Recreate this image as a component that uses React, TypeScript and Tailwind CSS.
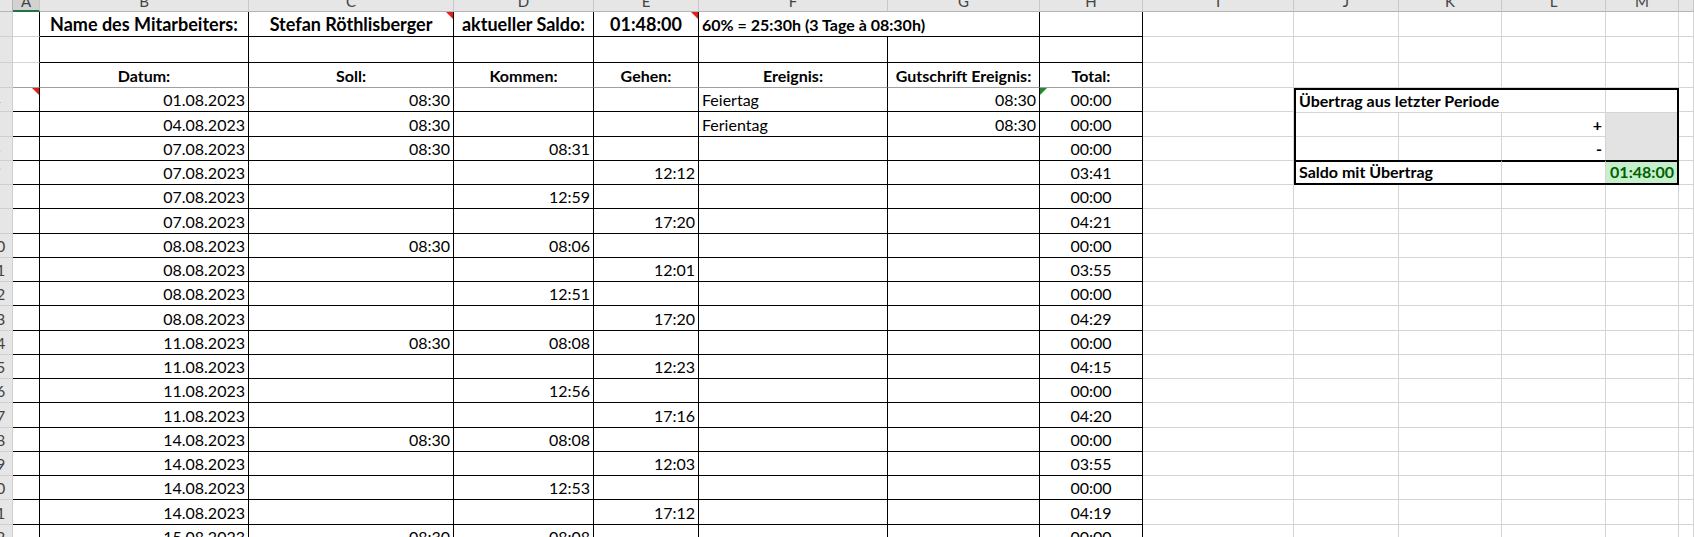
import type { ReactNode } from 'react';

const LETTERS = ['A', 'B', 'C', 'D', 'E', 'F', 'G', 'H', 'I', 'J', 'K', 'L', 'M', ''];

// Datum, Soll, Kommen, Gehen, Ereignis, Gutschrift, Total
const entries: string[][] = [
  ['01.08.2023', '08:30', '', '', 'Feiertag', '08:30', '00:00'],
  ['04.08.2023', '08:30', '', '', 'Ferientag', '08:30', '00:00'],
  ['07.08.2023', '08:30', '08:31', '', '', '', '00:00'],
  ['07.08.2023', '', '', '12:12', '', '', '03:41'],
  ['07.08.2023', '', '12:59', '', '', '', '00:00'],
  ['07.08.2023', '', '', '17:20', '', '', '04:21'],
  ['08.08.2023', '08:30', '08:06', '', '', '', '00:00'],
  ['08.08.2023', '', '', '12:01', '', '', '03:55'],
  ['08.08.2023', '', '12:51', '', '', '', '00:00'],
  ['08.08.2023', '', '', '17:20', '', '', '04:29'],
  ['11.08.2023', '08:30', '08:08', '', '', '', '00:00'],
  ['11.08.2023', '', '', '12:23', '', '', '04:15'],
  ['11.08.2023', '', '12:56', '', '', '', '00:00'],
  ['11.08.2023', '', '', '17:16', '', '', '04:20'],
  ['14.08.2023', '08:30', '08:08', '', '', '', '00:00'],
  ['14.08.2023', '', '', '12:03', '', '', '03:55'],
  ['14.08.2023', '', '12:53', '', '', '', '00:00'],
  ['14.08.2023', '', '', '17:12', '', '', '04:19'],
  ['15.08.2023', '08:30', '08:08', '', '', '', '00:00'],
];

const align = ['justify-end', 'justify-end', 'justify-end', 'justify-end', 'justify-start', 'justify-end', 'justify-center'];

const GRID = 'border-[#d4d4d4]';

function Cell({ className = '', children }: { className?: string; children?: ReactNode }) {
  return (
    <div className={`relative flex items-end whitespace-nowrap border-r border-b px-[3px] pb-[3px] leading-none ${className}`}>
      {children}
    </div>
  );
}

function RedMark({ left = false, color = '#e0211b' }: { left?: boolean; color?: string }) {
  return (
    <svg className={`absolute top-0 ${left ? 'left-0' : 'right-0'} h-[7px] w-[7px]`} viewBox="0 0 7 7">
      <polygon points={left ? '0,0 7,0 0,7' : '0,0 7,0 7,7'} fill={color} />
    </svg>
  );
}

function RowHead({ n }: { n: number }) {
  return (
    <div className="overflow-hidden border-r border-b border-[#cfcfcf] bg-[#e6e6e6]">
      <div className="-ml-[18px] flex h-full w-[28px] items-end justify-center pb-[3px] text-[16px] leading-none text-[#444]">
        {n}
      </div>
    </div>
  );
}

function Blank({ n }: { n: number }) {
  return (
    <>
      {Array.from({ length: n }).map((_, i) => (
        <Cell key={i} className={GRID} />
      ))}
    </>
  );
}

export default function App() {
  return (
    <div className="h-[537px] w-full overflow-hidden bg-white font-[Lato,sans-serif] text-[16px] text-black">
      <div className="grid grid-cols-[13px_27px_209px_205px_140px_105px_189px_152px_103px_151px_105px_103px_104px_73px_1fr] grid-rows-[12px_25px_26px_25px_repeat(19,24.25px)]">
        {/* column headers */}
        <div className="border-r border-b border-[#b5b5b5] bg-[#e6e6e6]" />
        {LETTERS.map((l, i) => (
          <div
            key={i}
            className={`overflow-hidden border-r ${i === 0 ? 'border-b-2 border-b-[#217346] border-r-[#c8c8c8] bg-[#d2d2d2]' : 'border-b border-[#c8c8c8] border-b-[#b5b5b5] bg-[#e6e6e6]'}`}
          >
            <div className="-mt-[6px] text-center text-[15px] leading-none text-[#444]">{l}</div>
          </div>
        ))}

        {/* row 1 */}
        <RowHead n={1} />
        <Cell className="border-r-black border-b-[#d4d4d4]" />
        <Cell className="justify-center border-black text-[18px] font-bold">Name des Mitarbeiters:</Cell>
        <Cell className="justify-center border-black text-[18px] font-bold">
          Stefan Röthlisberger
          <RedMark />
        </Cell>
        <Cell className="justify-center border-black text-[18px] font-bold">aktueller Saldo:</Cell>
        <Cell className="justify-center border-black text-[18px] font-bold">
          01:48:00
          <RedMark />
        </Cell>
        <Cell className="col-span-2 justify-start border-black text-[16px] font-bold">60% = 25:30h (3 Tage à 08:30h)</Cell>
        <Cell className="border-black" />
        <Blank n={6} />

        {/* row 2 */}
        <RowHead n={2} />
        <Cell className="border-r-black border-b-[#d4d4d4]" />
        {Array.from({ length: 7 }).map((_, i) => (
          <Cell key={i} className="border-black" />
        ))}
        <Blank n={6} />

        {/* row 3 */}
        <RowHead n={3} />
        <Cell className="border-r-black border-b-[#a0a0a0]" />
        {['Datum:', 'Soll:', 'Kommen:', 'Gehen:', 'Ereignis:', 'Gutschrift Ereignis:', 'Total:'].map((h) => (
          <Cell key={h} className="justify-center border-r-black border-b-[#a0a0a0] font-bold">
            {h}
          </Cell>
        ))}
        <Blank n={6} />

        {/* Übertrag box, J4:M7 */}
        <div className="col-start-11 col-span-4 row-start-5 row-span-4 grid grid-cols-[103px_103px_104px_1fr] grid-rows-[23px_24px_23px_1fr] border-2 border-black font-bold">
          <Cell className={`col-span-3 ${GRID}`}>Übertrag aus letzter Periode</Cell>
          <div className={`border-b ${GRID}`} />
          <Cell className={GRID} />
          <Cell className={GRID} />
          <Cell className={`justify-end ${GRID}`}>+</Cell>
          <div className="row-span-2 bg-[#e3e3e3]" />
          <Cell className={`border-b-0 ${GRID}`} />
          <Cell className={`border-b-0 ${GRID}`} />
          <Cell className={`justify-end border-b-0 ${GRID}`}>-</Cell>
          <Cell className={`col-span-2 border-b-0 border-t-2 border-t-black ${GRID}`}>Saldo mit Übertrag</Cell>
          <Cell className={`border-b-0 border-t-2 border-t-black ${GRID}`} />
          <div className="flex items-end justify-end border-t-2 border-black bg-[#c6efce] px-[3px] pb-[3px] leading-none text-[#006100]">
            01:48:00
          </div>
        </div>

        {/* data rows */}
        {entries.map((e, r) => (
          <>
            <RowHead key={`h${r}`} n={r + 4} />
            <Cell key={`a${r}`} className="border-black">
              {r === 0 && <RedMark />}
            </Cell>
            {e.map((v, c) => (
              <Cell key={`${r}-${c}`} className={`${align[c]} border-black`}>
                {v}
                {r === 0 && c === 6 && <RedMark left color="#1f8a2e" />}
              </Cell>
            ))}
            <Cell key={`i${r}`} className={GRID} />
            {r > 3 && <Blank key={`b${r}`} n={4} />}
            <Cell key={`n${r}`} className={GRID} />
          </>
        ))}
      </div>
    </div>
  );
}
